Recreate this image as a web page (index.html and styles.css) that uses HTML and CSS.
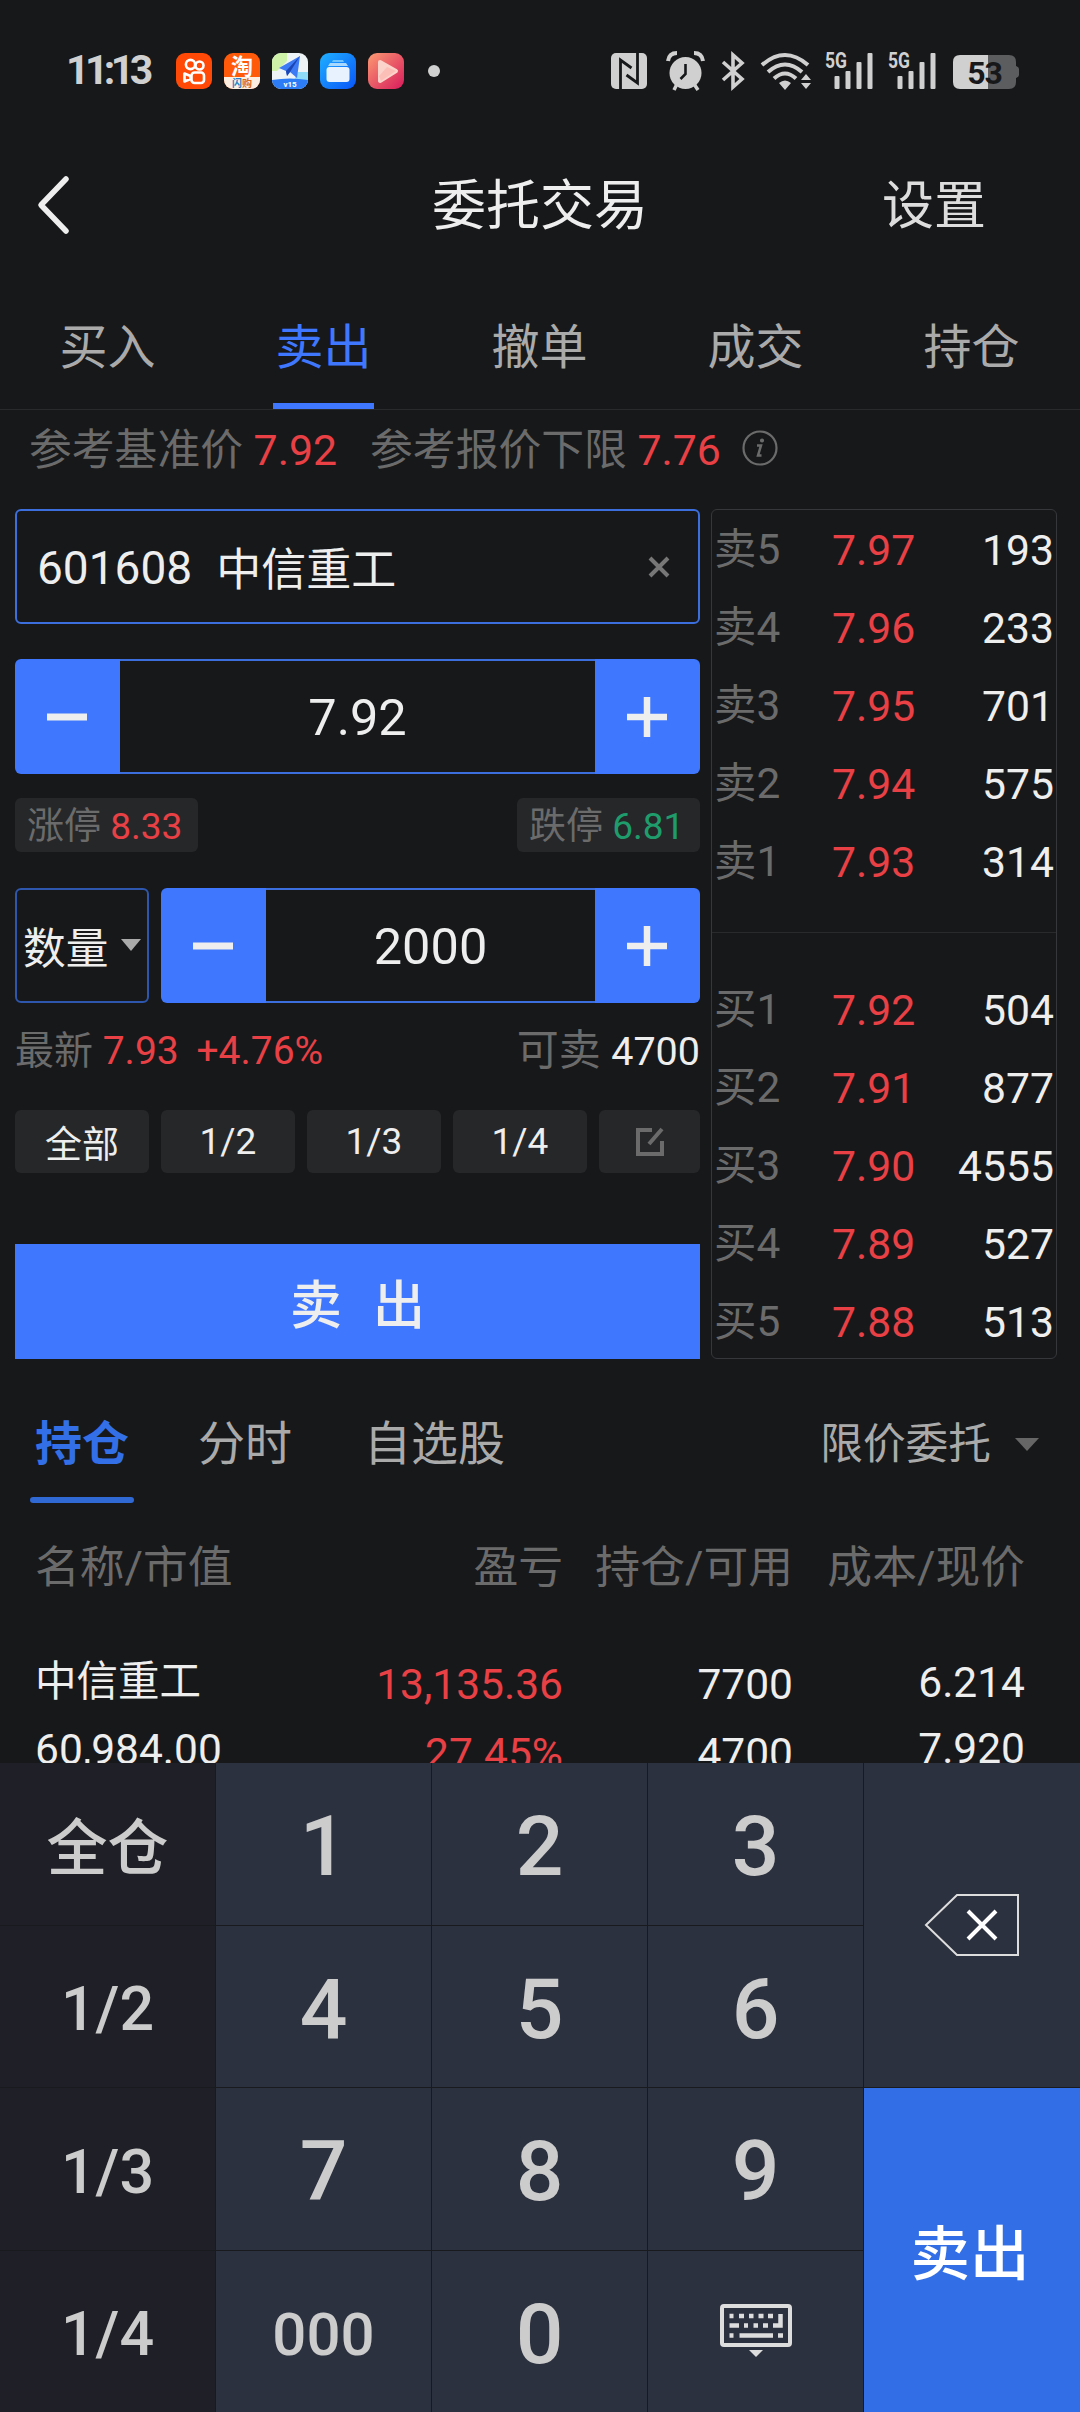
FILE: index.html
```
<!DOCTYPE html>
<html lang="zh-CN">
<head>
    <meta charset="UTF-8">
    <meta name="viewport" content="width=device-width, initial-scale=1.0">
    <title>委托交易</title>
    <link rel="stylesheet" href="styles.css">
</head>
<body>
    <div class="status-bar">
        <span class="time">11:13</span>
        <div class="apps">
            <svg width="36" height="36" viewBox="0 0 36 36">
                <rect width="36" height="36" rx="9" fill="#ff4906"/>
                <g fill="none" stroke="#fff" stroke-width="2.6">
                    <circle cx="14.5" cy="11.5" r="4.6"/>
                    <circle cx="23.5" cy="12.5" r="4"/>
                    <rect x="15.5" y="19.5" width="12.5" height="10.5" rx="3"/>
                    <path d="M8.5 20.5v8l6-2.5v-3z" stroke-linejoin="round"/>
                </g>
            </svg>
            <svg width="36" height="36" viewBox="0 0 36 36">
                <defs><clipPath id="clip"><rect width="36" height="36" rx="9"/></clipPath></defs>
                <g clip-path="url(#clip)">
                    <rect width="36" height="36" fill="#ff5a0a"/>
                    <path d="M0 24h36v12H0z" fill="#fdeee2"/>
                </g>
                <text class="tao" x="18" y="21" text-anchor="middle">淘</text>
                <text class="shan" x="18" y="34" text-anchor="middle"><tspan fill="#2b7fc4">闪</tspan>购</text>
            </svg>
            <svg width="36" height="36" viewBox="0 0 36 36">
                <g clip-path="url(#clip)">
                    <rect width="36" height="36" fill="#eef3f6"/>
                    <path d="M0 0h15v8L5 18H0z" fill="#cdf2a8"/>
                    <path d="M26 19h10v8H22z" fill="#8fdcf8"/>
                    <path d="M0 27q18-3 36 0v9H0z" fill="#2c7df5"/>
                </g>
                <path d="M28 3L7 15l7 3 1 5 3-4 7 6z" fill="#3d7bf5"/>
                <path d="M28 3L14 18l1 5 3-4z" fill="#1c46b4"/>
                <text class="v15" x="18" y="34" text-anchor="middle">v15</text>
            </svg>
            <svg width="36" height="36" viewBox="0 0 36 36">
                <defs>
                    <linearGradient id="blue" x2="1" y2="1"><stop stop-color="#1fb0ff"/><stop offset="1" stop-color="#0a55f7"/></linearGradient>
                    <linearGradient id="red" x2="1" y2="1"><stop stop-color="#fb9a72"/><stop offset="1" stop-color="#d81b5c"/></linearGradient>
                </defs>
                <rect width="36" height="36" rx="9" fill="url(#blue)"/>
                <path d="M13 7h10l1 2H12z" fill="#6fc3ff"/>
                <path d="M10 10h16l2 3H8z" fill="#a9d8ff"/>
                <rect x="6.500" y="14" width="23" height="15" rx="3" fill="#e8f2ff"/>
            </svg>
            <svg width="36" height="36" viewBox="0 0 36 36">
                <rect width="36" height="36" rx="9" fill="url(#red)"/>
                <path d="M12 9l16 9-16 10z" fill="#fcd3cb" stroke="#fcd3cb" stroke-width="4" stroke-linejoin="round"/>
                <path d="M11 23l8-9 9 4-15 10z" fill="#fbb3ac" opacity=".6"/>
            </svg>
        </div>
        <span class="dot"></span>

        <svg class="sys" width="410" height="40" viewBox="610 50 410 40" fill="#d0d0d0">
            <!-- nfc -->
            <rect x="611" y="52" width="36" height="36" rx="5"/>
            <path d="M620.500 88V59l11 8M637.500 52v30l-11-8" fill="none" stroke="#17181a" stroke-width="2.800"/>
            <!-- alarm -->
            <circle cx="685.500" cy="72" r="16"/>
            <path d="M668 60q1-8 9-8M703 60q-1-8-9-8" fill="none" stroke="#d0d0d0" stroke-width="4"/>
            <path d="M677 83l-3 6M694 83l4 6" stroke="#d0d0d0" stroke-width="3.500"/>
            <path d="M685.500 63v10l-5 5" fill="none" stroke="#17181a" stroke-width="2.600"/>
            <!-- bluetooth -->
            <path d="M723 61l19 17-9 8V54l9 8-19 17" fill="none" stroke="#d0d0d0" stroke-width="3.600"/>
            <!-- wifi -->
            <g fill="none" stroke="#d0d0d0" stroke-width="4">
                <path d="M762 64q23-20 46 0M768 71q17-15 34 0M774 77.500q11-10 22 0"/>
            </g>
            <path d="M779 82q6-5 12 0l-6 7zM801 79l5-6 5 6zM801 82l5 6 5-6z"/>
            <!-- signal -->
            <g>
                <rect x="834.500" y="75" width="5" height="13" rx="1"/>
                <rect x="845.500" y="70" width="5" height="18" rx="1"/>
                <rect x="856.500" y="61" width="5" height="27" rx="1"/>
                <rect x="867.500" y="52" width="5" height="36" rx="1"/>
                <text class="net" x="825" y="67" textLength="22" lengthAdjust="spacingAndGlyphs">5G</text>
            </g>
            <g transform="translate(63 0)">
                <rect x="834.500" y="75" width="5" height="13" rx="1"/>
                <rect x="845.500" y="70" width="5" height="18" rx="1"/>
                <rect x="856.500" y="61" width="5" height="27" rx="1"/>
                <rect x="867.500" y="52" width="5" height="36" rx="1"/>
                <text class="net" x="825" y="67" textLength="22" lengthAdjust="spacingAndGlyphs">5G</text>
            </g>
            <!-- battery -->
            <path d="M988 54h21q7 0 7 7v4q3 1 3 3v6q0 2-3 3v4q0 7-7 7h-21z" fill="#5c5d5f"/>
            <path d="M988 54h-28q-7 0-7 7v20q0 7 7 7h28z"/>
            <text class="level" x="984.500" y="83" text-anchor="middle">53</text>
        </svg>
    </div>

    <header class="header">
        <svg width="36" height="60" viewBox="0 0 36 60"><path d="M30 4L5 30l25 26" fill="none" stroke="#eee" stroke-width="5.500" stroke-linecap="round" stroke-linejoin="round"/></svg>
        <h1>委托交易</h1>
        <span class="settings">设置</span>
    </header>

    <nav class="tabs">
        <a>买入</a>
        <a class="active">卖出</a>
        <a>撤单</a>
        <a>成交</a>
        <a>持仓</a>
    </nav>

    <div class="reference">
        <span>参考基准价 <b>7.92</b></span>
        <span>参考报价下限 <b>7.76</b></span>
        <svg width="36" height="36" viewBox="0 0 36 36" fill="none" stroke="#6b6b6b" stroke-width="2.200">
            <circle cx="18" cy="18" r="16.500"/>
            <path d="M15 15.500h4l-3 10h3.500" stroke-width="2.500"/>
            <circle cx="20" cy="10.500" r="1" fill="#6b6b6b"/>
        </svg>
    </div>

    <main class="trade">
        <section class="form">
            <div class="stock">
                <span class="code">601608</span>
                <span class="name">中信重工</span>
                <svg width="24" height="24" viewBox="0 0 24 24"><path d="M3 3l18 18M21 3L3 21" stroke="#777" stroke-width="4"/></svg>
            </div>

            <div class="stepper">
                <button><svg width="40" height="40"><path d="M0 20h40" stroke="#eee" stroke-width="7"/></svg></button>
                <span>7.92</span>
                <button><svg width="40" height="40"><path d="M0 20h40M20 0v40" stroke="#eee" stroke-width="6.500"/></svg></button>
            </div>

            <div class="limits">
                <span>涨停 <b class="up">8.33</b></span>
                <span>跌停 <b class="down">6.81</b></span>
            </div>

            <div class="quantity">
                <div class="unit">数量<svg width="20" height="12"><path d="M0 0h20L10 12z" fill="#aaa"/></svg></div>
                <div class="stepper">
                    <button><svg width="40" height="40"><path d="M0 20h40" stroke="#eee" stroke-width="7"/></svg></button>
                    <span>2000</span>
                    <button><svg width="40" height="40"><path d="M0 20h40M20 0v40" stroke="#eee" stroke-width="6.500"/></svg></button>
                </div>
            </div>

            <div class="latest">
                <span>最新 <b class="up">7.93</b> <b class="up">+4.76%</b></span>
                <span class="available">可卖 <b>4700</b></span>
            </div>

            <div class="portions">
                <button>全部</button>
                <button>1/2</button>
                <button>1/3</button>
                <button>1/4</button>
                <button><svg width="30" height="30" viewBox="0 0 30 30" fill="none" stroke="#6b6b6b" stroke-width="4"><path d="M17 3H3v24h24V14M14 17L27 2"/></svg></button>
            </div>

            <button class="submit">卖 出</button>
        </section>

        <section class="book">
            <div class="level-row"><span>卖5</span><b>7.97</b><i>193</i></div>
            <div class="level-row"><span>卖4</span><b>7.96</b><i>233</i></div>
            <div class="level-row"><span>卖3</span><b>7.95</b><i>701</i></div>
            <div class="level-row"><span>卖2</span><b>7.94</b><i>575</i></div>
            <div class="level-row"><span>卖1</span><b>7.93</b><i>314</i></div>
            <hr>
            <div class="level-row"><span>买1</span><b>7.92</b><i>504</i></div>
            <div class="level-row"><span>买2</span><b>7.91</b><i>877</i></div>
            <div class="level-row"><span>买3</span><b>7.90</b><i>4555</i></div>
            <div class="level-row"><span>买4</span><b>7.89</b><i>527</i></div>
            <div class="level-row"><span>买5</span><b>7.88</b><i>513</i></div>
        </section>
    </main>

    <nav class="subtabs">
        <a class="active">持仓</a>
        <a>分时</a>
        <a>自选股</a>
        <div class="order-type">限价委托<svg width="24" height="13"><path d="M0 0h24L12 13z" fill="#666"/></svg></div>
    </nav>

    <section class="positions">
        <div class="columns">
            <span>名称/市值</span>
            <span>盈亏</span>
            <span>持仓/可用</span>
            <span>成本/现价</span>
        </div>
        <div class="position">
            <div class="c-name"><p>中信重工</p><p>60,984.00</p></div>
            <div class="c-profit"><p>13,135.36</p><p>27.45%</p></div>
            <div class="c-amount"><p>7700</p><p>4700</p></div>
            <div class="c-price"><p>6.214</p><p>7.920</p></div>
        </div>
    </section>

    <section class="keypad">
        <button class="side all">全仓</button>
        <button>1</button>
        <button>2</button>
        <button>3</button>
        <button class="tall">
            <svg width="96" height="64" viewBox="0 0 96 64" fill="none">
                <path d="M2 32L33 2h61v60H33z" stroke="#ddd" stroke-width="2"/>
                <path d="M44 18l28 28M72 18L44 46" stroke="#fff" stroke-width="4"/>
            </svg>
        </button>
        <button class="side">1/2</button>
        <button>4</button>
        <button>5</button>
        <button>6</button>
        <button class="side">1/3</button>
        <button>7</button>
        <button>8</button>
        <button>9</button>
        <button class="tall sell">卖出</button>
        <button class="side">1/4</button>
        <button class="small">000</button>
        <button>0</button>
        <button class="hide">
            <svg width="72" height="54" viewBox="0 0 72 54">
                <rect x="2" y="2" width="68" height="39" rx="2" fill="none" stroke="#ddd" stroke-width="4"/>
                <path d="M9.500 12h4M19 12h5M29 12h4.500M38.500 12h5M48 12h5M9.500 21.500h9.500M24 21.500h4M33.500 21.500h4.500M43 21.500h5M53 21.500h7.500V10M9.500 31.500h4M19.500 31.500h33.500M58 31.500h5" fill="none" stroke="#ddd" stroke-width="4.500"/>
                <path d="M29 46h14l-7 7z" fill="#ddd"/>
            </svg>
        </button>
    </section>
</body>
</html>
```
FILE: styles.css
```
* {
    box-sizing: border-box;
    margin: 0;
    padding: 0;
}

body {
    width: 1080px;
    height: 2412px;
    overflow: hidden;
    display: flex;
    flex-direction: column;
    background: #17181a;
    color: #eee;
    font-family: Roboto, "Noto Sans CJK SC", sans-serif;
}

b, i, h1 {
    font-weight: normal;
    font-style: normal;
}

button {
    border: none;
    color: inherit;
    font-family: inherit;
    display: flex;
    align-items: center;
    justify-content: center;
}

svg {
    display: block;
    flex-shrink: 0;
}

.up {
    color: #e84045;
}

.down {
    color: #1f9c6b;
}

/* status bar */
.status-bar {
    height: 142px;
    flex-shrink: 0;
    padding: 0 60px 0 66px;
    display: flex;
    align-items: center;
}

.time {
    width: 110px;
    padding-bottom: 2px;
    font-size: 41px;
    font-weight: bold;
    letter-spacing: -4.6px;
    color: #d0d0d0;
}

.apps {
    display: flex;
    gap: 12px;
}

.dot {
    width: 12px;
    height: 12px;
    margin-left: 24px;
    border-radius: 50%;
    background: #d0d0d0;
}

.sys {
    margin-left: auto;
    overflow: visible;
}

.tao {
    font-size: 22px;
    font-weight: bold;
    fill: #fff;
}

.shan {
    font-size: 10px;
    font-weight: bold;
    fill: #d9691e;
}

.v15 {
    font-size: 8px;
    font-weight: bold;
    fill: #fff;
}

.net {
    font-size: 22px;
    font-weight: bold;
}

.level {
    font-size: 32px;
    font-weight: bold;
    letter-spacing: -1px;
    fill: #17181a;
}

/* header */
.header {
    height: 130px;
    flex-shrink: 0;
    padding: 0 94px 0 36px;
    display: grid;
    grid-template-columns: 150px 1fr 92px;
    align-items: center;
}

.header svg {
    margin-bottom: 4px;
}

.header h1 {
    padding-bottom: 1px;
    font-size: 54px;
    line-height: 60px;
    text-align: center;
}

.settings {
    font-size: 52px;
    line-height: 60px;
    justify-self: end;
    white-space: nowrap;
    color: #ddd;
}

/* buy / sell tabs */
.tabs {
    height: 138px;
    flex-shrink: 0;
    display: flex;
    border-bottom: 1px solid #292a2c;
}

.tabs a {
    flex: 1;
    display: flex;
    flex-direction: column;
    align-items: center;
    padding: 20px 1px 0 0;
    font-size: 48px;
    line-height: 111px;
    color: #aaa;
}

.tabs .active {
    color: #3f78ff;
}

.tabs .active::after {
    content: "";
    width: 101px;
    height: 6px;
    background: #3f78ff;
}

.reference {
    height: 99px;
    flex-shrink: 0;
    padding: 0 29px 27px;
    display: flex;
    align-items: center;
    font-size: 42.8px;
    color: #6b6b6b;
}

.reference span {
    margin-right: 33px;
    white-space: pre;
}

.reference span + span {
    margin-right: 21px;
}

.reference svg {
    margin-top: 4px;
}

.reference b {
    color: #e84045;
}

/* order form */
.trade {
    flex-shrink: 0;
    padding-left: 15px;
    display: grid;
    grid-template-columns: 685px 346px;
    gap: 11px;
}

.form {
    display: flex;
    flex-direction: column;
}

.stock {
    height: 115px;
    padding: 0 27px 0 20px;
    display: flex;
    align-items: center;
    border: 2px solid #3c6fdd;
    border-radius: 6px;
    font-size: 46px;
}

.stock .code {
    padding-top: 2px;
}

.stock .name {
    margin-left: 24px;
    font-size: 45px;
}

.stock svg {
    margin-left: auto;
}

.form > .stepper {
    margin-top: 35px;
}

.stepper {
    flex: 1;
    height: 115px;
    display: flex;
    border-radius: 6px;
    overflow: hidden;
}

.stepper button {
    width: 105px;
    padding-right: 2px;
    background: #3f78ff;
}

.stepper span {
    flex: 1;
    border: solid #3c6fdd;
    border-width: 2px 0;
    text-align: center;
    font-size: 50.5px;
    line-height: 113px;
}

.form > .stepper {
    flex: none;
}

.stepper span {
    height: 115px;
}

.limits {
    margin-top: 24px;
    display: flex;
    justify-content: space-between;
}

.limits span {
    width: 183px;
    height: 54px;
    padding-left: 12px;
    border-radius: 6px;
    background: #262729;
    color: #6b6b6b;
    font-size: 37px;
    line-height: 57px;
    white-space: nowrap;
}

.quantity {
    margin-top: 36px;
    display: flex;
    gap: 12px;
}

.unit {
    width: 134px;
    display: flex;
    align-items: center;
    justify-content: space-between;
    padding: 0 6px 2px;
    border: 2px solid #2e56ad;
    border-radius: 6px;
    font-size: 42.7px;
}

.latest {
    height: 107px;
    padding-bottom: 20px;
    display: flex;
    align-items: center;
    justify-content: space-between;
    font-size: 39px;
    color: #6b6b6b;
}

.latest .up + .up {
    margin-left: 8px;
}

.available {
    font-size: 42px;
}

.available b {
    font-size: 39.5px;
    color: #eee;
}

.portions {
    display: grid;
    grid-template-columns: repeat(4, 134px) 101px;
    gap: 12px;
}

.portions button {
    height: 63px;
    border-radius: 6px;
    background: #262729;
    font-size: 37px;
}

.submit {
    height: 115px;
    margin-top: 71px;
    background: #3f78ff;
    font-size: 52px;
    font-weight: 500;
    word-spacing: 18px;
}

/* order book */
.book {
    height: 850px;
    padding-top: 1px;
    border: 1px solid #36373a;
    border-radius: 6px;
    overflow: hidden;
}

.book hr {
    margin: 31px 0 38px;
    border: none;
    border-top: 1px solid #292a2c;
}

.level-row {
    height: 78px;
    padding: 0 2px;
    display: grid;
    grid-template-columns: 118px 1fr 1fr;
    font-size: 42.7px;
    line-height: 78px;
}

.level-row span {
    color: #6b6b6b;
    font-size: 42.4px;
}

.level-row b {
    color: #e84045;
}

.level-row i {
    text-align: right;
}

/* positions */
.subtabs {
    flex-shrink: 0;
    height: 112px;
    margin-top: 32px;
    padding: 0 41px 0 30px;
    display: flex;
    font-size: 47px;
    line-height: 106px;
    color: #aaa;
}

.subtabs a {
    display: flex;
    flex-direction: column;
    padding: 0 5px;
    margin-right: 59px;
}

.subtabs a + a {
    margin-right: 62px;
}

.subtabs .active {
    padding: 0;
    width: 104px;
    align-items: center;
    color: #3370e8;
    font-weight: bold;
}

.subtabs .active::after {
    content: "";
    width: 104px;
    height: 6px;
    border-radius: 3px;
    background: #3068d4;
}

.order-type {
    height: 106px;
    margin-left: auto;
    display: flex;
    align-items: center;
    gap: 24px;
    font-size: 42.7px;
}

.positions {
    flex: 1;
    min-height: 0;
    overflow: hidden;
    padding: 25px 55px 0 35px;
}

.columns, .position {
    display: grid;
    grid-template-columns: 278px 250px 230px 232px;
    text-align: right;
    white-space: nowrap;
}

.columns {
    height: 120px;
    font-size: 44.8px;
    line-height: 80px;
    color: #6b6b6b;
}

.columns span:first-child, .c-name {
    text-align: left;
}

.position {
    font-size: 42.5px;
}

.c-name {
    line-height: 68px;
}

.c-name p:first-child {
    font-size: 41.5px;
}

.c-profit {
    line-height: 69px;
    padding-top: 2px;
    color: #e84045;
}

.c-amount {
    line-height: 69px;
    padding: 2px 0 0;
}

.c-price {
    line-height: 66px;
    padding-top: 2px;
}

/* keypad */
.keypad {
    flex-shrink: 0;
    height: 649px;
    display: grid;
    grid-template-columns: repeat(4, 215px) 1fr;
    grid-template-rows: repeat(4, 1fr);
    gap: 1px;
    background: #191a1d;
}

.keypad button {
    padding-top: 6px;
    background: #2c313f;
    color: #ccc;
    font-size: 84px;
    font-weight: 500;
}

.keypad .tall {
    grid-row: span 2;
    padding-top: 0;
}

.keypad .side {
    background: #1f2027;
    font-size: 61px;
}

.keypad .all, .keypad .hide {
    padding-top: 0;
}

.keypad .small {
    font-size: 60px;
}

.keypad .sell {
    padding: 0 4px 2px 0;
    background: #326fe6;
    color: #fff;
    font-size: 59.5px;
}
```
